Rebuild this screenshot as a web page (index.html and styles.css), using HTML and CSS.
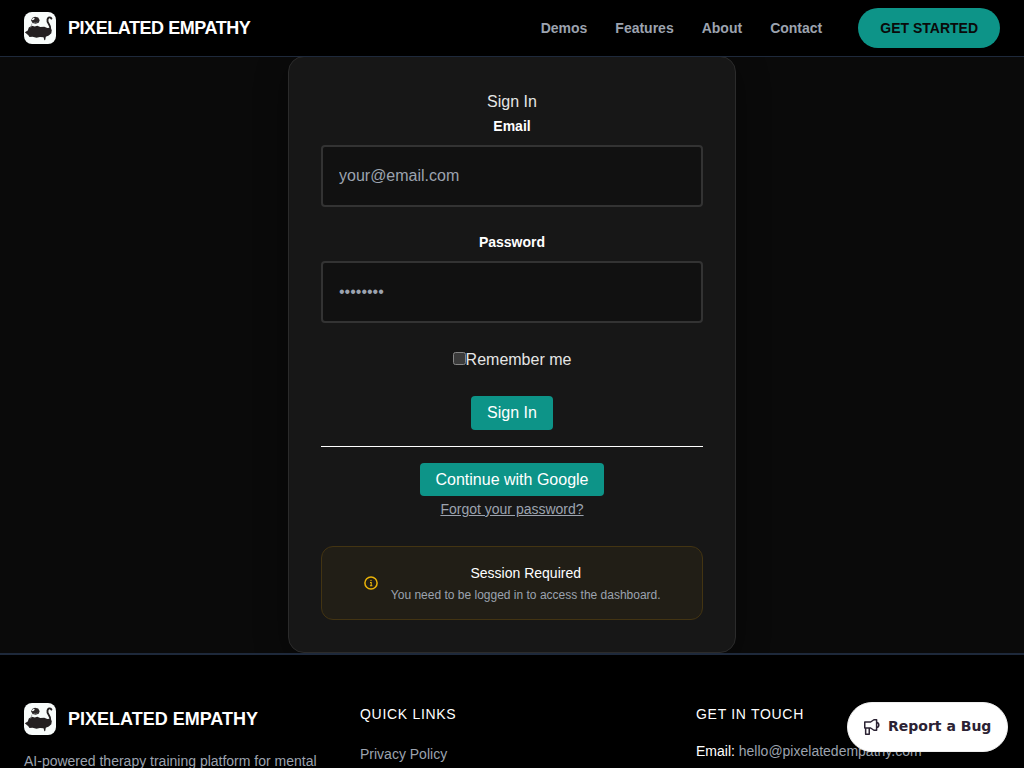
FILE: index.html
```html
<!DOCTYPE html>
<html lang="en">
<head>
<meta charset="utf-8">
<title>Sign In - Pixelated Empathy</title>
<link rel="stylesheet" href="styles.css">
</head>
<body>
<svg width="0" height="0" class="defs" aria-hidden="true">
  <symbol id="logo" viewBox="0 0 32 32">
    <rect width="32" height="32" rx="8" fill="#f8fcfb"/>
    <path fill="#242021" d="M.8 20.200l3-1.800 1-2.800 3-1.800 3 .8 2.500-.8 3 1.300 4-.4 3 1.200 2.500-.2 2 2.300-.5 3.200-2.500 2.300-3 1.200-.6 3.300-.8.300-.9-3-3.500-.4-3.500.9-4-1-3 .3-1.200-1.800z"/>
    <path fill="none" stroke="#242021" stroke-width="1.900" stroke-linecap="round" d="M27.400 6.500L26.500 5.600Q24.300 4.700 23.500 7.500Q23 9.500 24.800 12T26.300 17.500"/>
    <path fill="#2b2728" d="M7 8.300l1.500-2.500 2.500-1 3.200.7 1.500 2.700-1 2.500-3 1-3.200-.7z"/>
    <path fill="#f3f6f5" d="M7.700 7.500l1.500-1.500 1.600.1-.8 1.700-2 .5z"/>
    <path fill="#777" d="M9 10l2.500.6 2.500-1.200-.8 1.200-2.700.3z"/>
    <path fill="none" d="M8 11.500L6.700 15.500" stroke="#999" stroke-width=".8"/>
  </symbol>
</svg>
<header class="header">
  <a class="brand"><svg class="logo"><use href="#logo"/></svg><span>PIXELATED EMPATHY</span></a>
  <nav class="nav"><a>Demos</a><a>Features</a><a>About</a><a>Contact</a><a class="cta">GET STARTED</a></nav>
</header>
<main class="main">
  <section class="card">
    <div class="title">Sign In</div>
    <label class="label" for="email">Email</label>
    <input class="field" id="email" type="email" placeholder="your@email.com">
    <label class="label label-password" for="password">Password</label>
    <input class="field" id="password" type="password" placeholder="••••••••">
    <label class="remember"><input class="check" type="checkbox">Remember me</label>
    <button class="button">Sign In</button>
    <div class="divider"></div>
    <button class="button google">Continue with Google</button>
    <a class="forgot">Forgot your password?</a>
    <div class="notice">
      <svg class="info" viewBox="0 0 14 14" fill="none" stroke="#eab308"><circle cx="7" cy="7" r="6.100" stroke-width="1.500"/><path d="M6 6.500h1.200v3M5.900 9.700h2.500" stroke-width="1.100"/><circle cx="7" cy="4.500" r=".65" fill="#eab308" stroke="none"/></svg>
      <div><p class="notice-title">Session Required</p><p class="notice-text">You need to be logged in to access the dashboard.</p></div>
    </div>
  </section>
</main>
<footer class="footer">
  <div>
    <a class="brand footer-brand"><svg class="logo"><use href="#logo"/></svg><span>PIXELATED EMPATHY</span></a>
    <p class="about">AI-powered therapy training platform for mental</p>
  </div>
  <div><h3 class="heading">QUICK LINKS</h3><a class="link">Privacy Policy</a></div>
  <div><h3 class="heading">GET IN TOUCH</h3><p class="contact">Email: <a>hello@pixelatedempathy.com</a></p></div>
</footer>
<button class="bug">
  <svg class="horn" viewBox="0 0 16 16" fill="none" stroke="#2b2233" stroke-width="1.500" stroke-linejoin="round"><path d="M.75 3h5.900L9.900.75h2.700v10.500H9.900L6.650 9H.75zM1.650 9v6.250h3.600V9M12.600 3.300a2.750 2.750 0 0 1 0 5.400"/></svg>
  <span class="bug-text">Report a Bug</span>
</button>
</body>
</html>
```

FILE: styles.css
```css
* { box-sizing: border-box; }
html, body { height: 100%; }
body {
  margin: 0;
  background: #0a0a0a;
  color: #e5e5e5;
  font-family: "Liberation Sans", Arial, sans-serif;
  font-size: 16px;
  line-height: 24px;
  overflow: hidden;
}
p, h3 { margin: 0; }
.defs { position: absolute; }
.header {
  position: fixed;
  top: 0;
  left: 0;
  right: 0;
  z-index: 5;
  display: flex;
  justify-content: space-between;
  align-items: center;
  height: 57px;
  padding: 0 24px;
  background: #000;
  border-bottom: 1px solid #1e293b;
}
.brand {
  display: flex;
  align-items: center;
  gap: 12px;
  color: #fff;
  font-size: 18px;
  font-weight: 700;
  letter-spacing: -0.45px;
}
.logo { width: 32px; height: 32px; }
.nav {
  display: flex;
  align-items: center;
  gap: 28px;
  color: #9ca3af;
  font-size: 14px;
  font-weight: 700;
}
.cta {
  margin-left: 8px;
  padding: 0 22px;
  border-radius: 20px;
  background: #0d9488;
  color: #0a0a0a;
  line-height: 40px;
}
.main { padding-top: 56px; }
.card {
  display: flex;
  flex-direction: column;
  align-items: center;
  width: 448px;
  height: 597px;
  margin: 0 auto;
  padding: 33px 32px 32px;
  background: #171717;
  border: 1px solid #2b2b2b;
  border-radius: 16px;
  box-shadow: 0 8px 32px rgba(0, 0, 0, .4);
}
.card > * { flex-shrink: 0; }
.label {
  color: #fff;
  font-size: 14px;
  font-weight: 700;
  line-height: 20px;
  margin: 2px 0 9px;
}
.label-password { margin: 25px 0 9px; }
.field {
  width: 382px;
  height: 62px;
  padding: 0 16px;
  background: #111;
  border: 2px solid #333;
  border-radius: 4px;
  font: 16px "Liberation Sans", Arial, sans-serif;
  color: #fff;
}
.field::placeholder { color: #9ca3af; opacity: 1; }
.remember { display: flex; align-items: center; margin-top: 25px; }
.check {
  appearance: none;
  width: 13px;
  height: 13px;
  margin: 0 0 3px;
  background: #3b3b3b;
  border: 1px solid #858585;
  border-radius: 2.5px;
}
.button {
  height: 34px;
  margin-top: 24px;
  padding: 0 16px;
  border: 0;
  border-radius: 4px;
  background: #0d9488;
  color: #fff;
  font: 16px/24px "Liberation Sans", Arial, sans-serif;
}
.divider { width: 382px; height: 1px; margin: 16px 0; background: #fff; }
.google { height: 33px; margin: 0; }
.forgot {
  margin-top: 3px;
  color: #9ca3af;
  font-size: 14px;
  line-height: 20px;
  text-decoration: underline;
}
.notice {
  display: flex;
  justify-content: center;
  align-items: center;
  gap: 12.5px;
  width: 382px;
  height: 74px;
  padding-left: 1px;
  margin-top: 27px;
  background: #211e16;
  border: 1px solid #433412;
  border-radius: 12px;
  text-align: center;
}
.info { width: 14px; height: 14px; }
.notice-title { color: #fff; font-size: 14px; line-height: 20px; }
.notice-text { margin-top: 4px; color: #9ca3af; font-size: 12px; line-height: 16px; }
.footer {
  position: relative;
  display: grid;
  grid-template-columns: repeat(3, 1fr);
  gap: 32px;
  height: 115px;
  overflow: hidden;
  padding: 48px 24px 0;
  background: #000;
  border-top: 2px solid #1e293b;
  color: #9ca3af;
  font-size: 14px;
  line-height: 20px;
}
.footer-brand { letter-spacing: 0; }
.about { margin-top: 16px; white-space: nowrap; }
.heading {
  margin: 1px 0 20px;
  color: #fff;
  font-size: 14px;
  font-weight: 400;
  line-height: 20px;
  letter-spacing: .7px;
}
.contact { margin-top: -3px; color: #fff; }
.contact a { color: #9ca3af; }
.bug {
  position: fixed;
  right: 16px;
  bottom: 16px;
  display: flex;
  align-items: center;
  gap: 8px;
  width: 161px;
  height: 50px;
  padding: 0 16px;
  background: #fff;
  border: 1px solid #eee;
  border-radius: 25px;
  color: #2b2233;
  font: 600 14px "DejaVu Sans", sans-serif;
  white-space: nowrap;
}
.horn { flex: none; width: 16px; height: 16px; }
.bug-text { padding-bottom: 2px; }
```
